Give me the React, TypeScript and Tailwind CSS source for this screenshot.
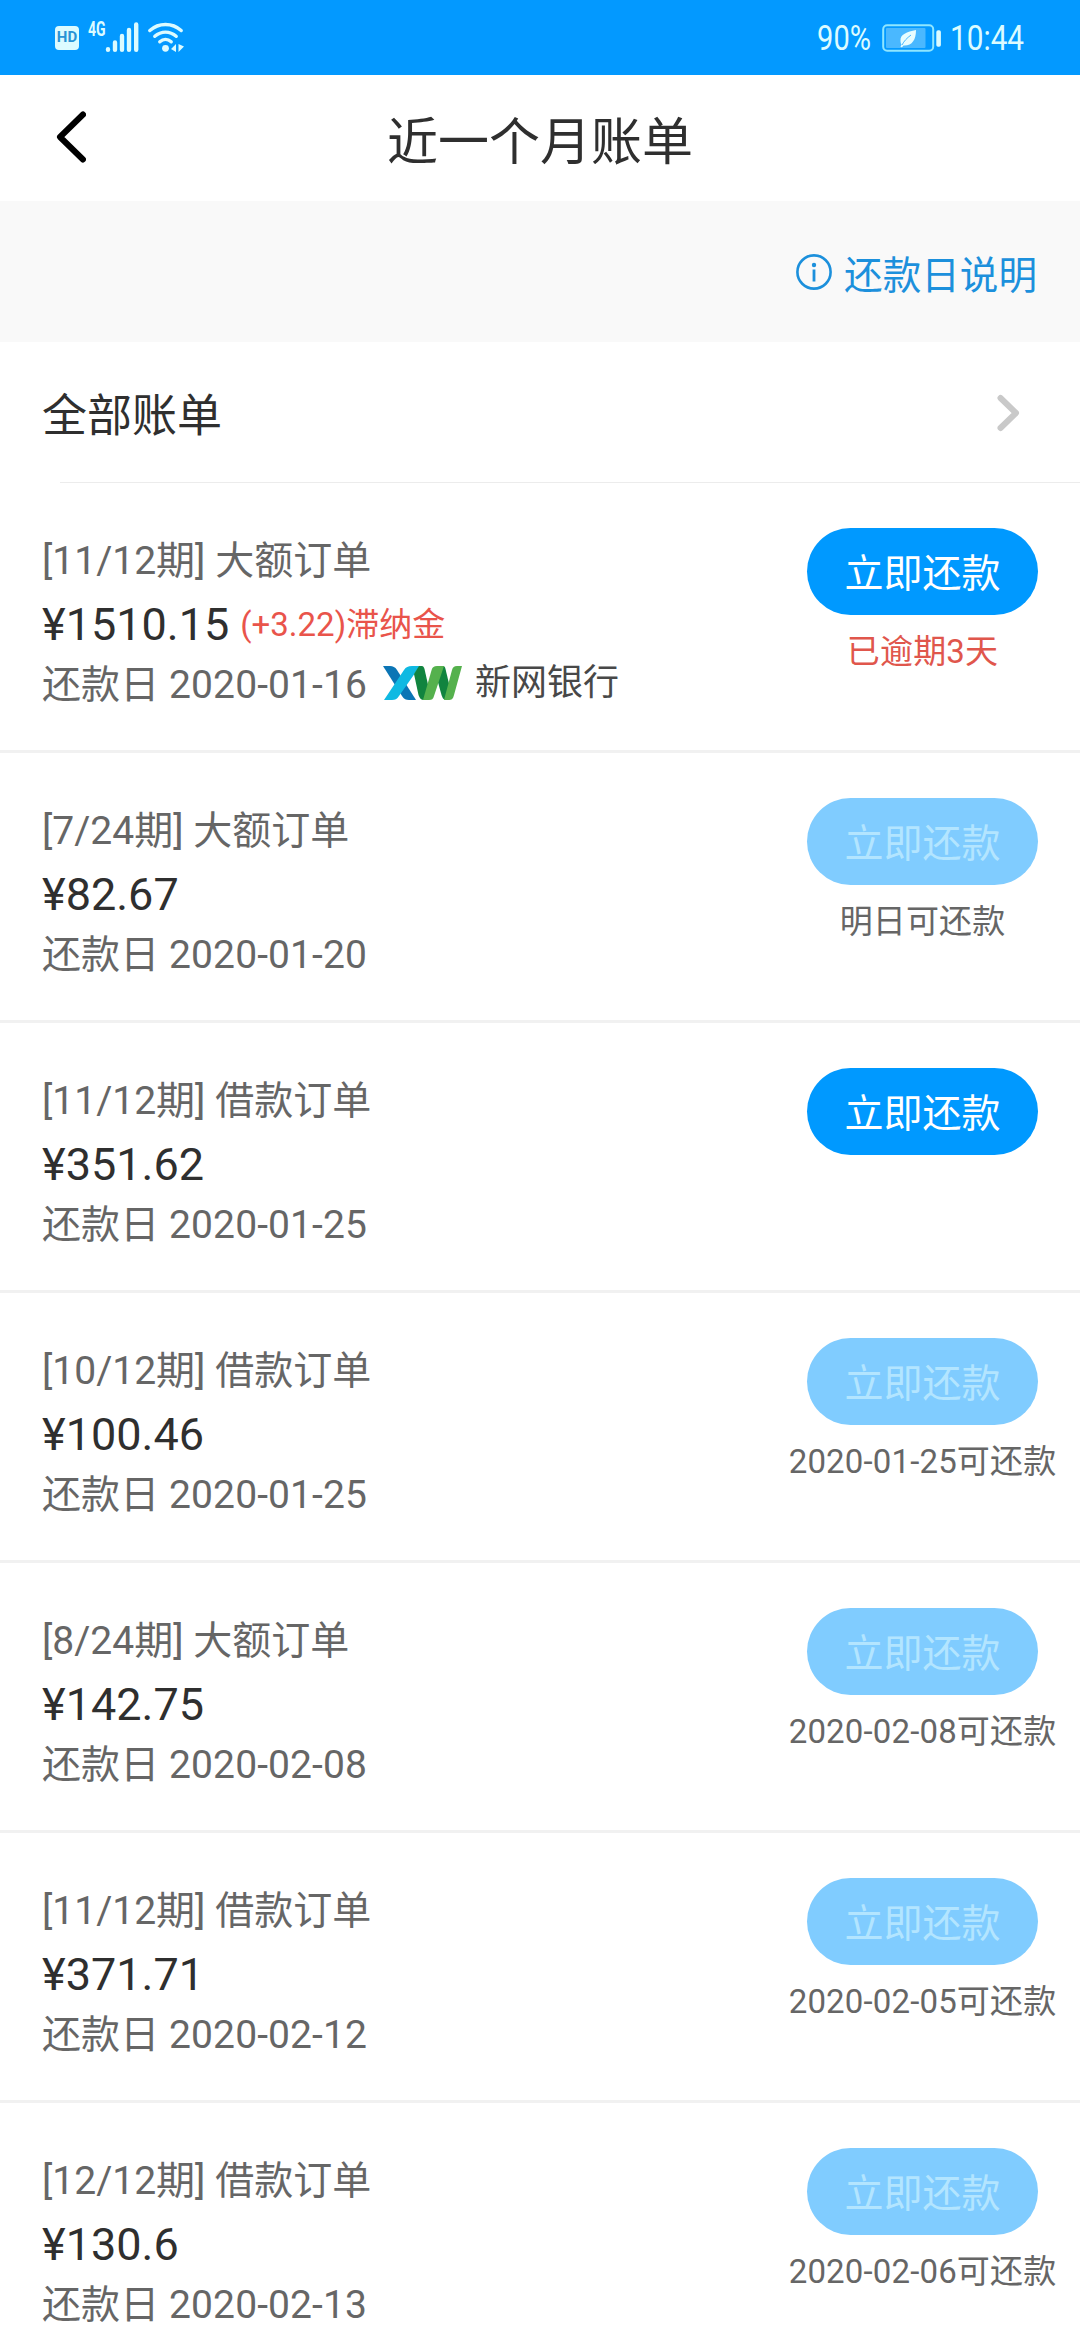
type Bill = {
  period: string;
  kind: string;
  amount: string;
  lateFee?: string;
  dueDate: string;
  bank?: boolean;
  payable: boolean;
  note?: string;
};

const BILLS: Bill[] = [
  { period: "11/12", kind: "大额订单", amount: "1510.15", lateFee: "3.22", dueDate: "2020-01-16", bank: true, payable: true, note: "已逾期3天" },
  { period: "7/24", kind: "大额订单", amount: "82.67", dueDate: "2020-01-20", payable: false, note: "明日可还款" },
  { period: "11/12", kind: "借款订单", amount: "351.62", dueDate: "2020-01-25", payable: true },
  { period: "10/12", kind: "借款订单", amount: "100.46", dueDate: "2020-01-25", payable: false, note: "2020-01-25可还款" },
  { period: "8/24", kind: "大额订单", amount: "142.75", dueDate: "2020-02-08", payable: false, note: "2020-02-08可还款" },
  { period: "11/12", kind: "借款订单", amount: "371.71", dueDate: "2020-02-12", payable: false, note: "2020-02-05可还款" },
  { period: "12/12", kind: "借款订单", amount: "130.6", dueDate: "2020-02-13", payable: false, note: "2020-02-06可还款" },
];

function StatusBar() {
  return (
    <div className="flex h-[75px] shrink-0 items-center justify-between bg-[#0399ff] pr-[57px] pl-[55px] text-[#dcfbff]">
      <div className="flex h-full items-center">
        <span className="flex h-6 w-6 items-center justify-center rounded-[4px] bg-[#dcfbff] text-[15px] font-bold text-[#2a93d5]">
          <span className="-mx-1">HD</span>
        </span>
        <span className="mb-[17px] ml-[9px] w-[17px] origin-left scale-x-[0.7] text-[20px] leading-none font-bold">4G</span>
        {/* Signal bars */}
        <svg viewBox="0 0 34 32" className="mb-px h-8 w-[34px]" stroke="currentColor" strokeWidth="4.4" strokeLinecap="round">
          <path d="M3 28.3V28.8M10 21.5V28.8M17 15V28.8M24 9V28.8M31.2 3.5V28.8" />
        </svg>
        {/* Wifi */}
        <svg viewBox="0 0 38 32" className="mb-px ml-[8px] h-8 w-[38px]" fill="none" stroke="currentColor" strokeWidth="3.4" strokeLinecap="round">
          <path d="M2.8 9.5C11.8 1.5 25.2 1.5 34.2 9.5M7.8 15.3C14.2 9.7 22.8 9.7 29.2 15.3M12.8 20.8C16.3 17.8 20.7 17.8 24.2 20.8" />
          <circle cx="18.5" cy="27.3" r="3.4" fill="currentColor" stroke="none" />
          <path d="M29 23V31L24 28ZM31.5 23V31L37 25.5Z" fill="currentColor" stroke="none" />
        </svg>
      </div>
      <div className="flex h-full items-center text-[35px] leading-none">
        <span className="w-[65px] origin-right scale-x-[0.83] pt-px text-right whitespace-nowrap">90%</span>
        <svg viewBox="0 0 60 30" className="ml-[11px] h-[30px] w-[60px]">
          <rect x="1.2" y="2.2" width="50" height="25.6" rx="4" fill="none" stroke="#8fe6ff" strokeWidth="2" />
          <rect x="4" y="5" width="39.5" height="20" rx="1" fill="#4ab8ff" />
          <path d="M34 7C25 9 18 11 18.5 18C18.6 20 19 21 19.5 21.5L18.5 24L20 24.3L21.5 22.5C30 23 34 17 34 7Z" fill="#e8fdff" />
          <path d="M20 22C22 18 25 15 29 12" fill="none" stroke="#4ab8ff" strokeWidth="1" />
          <rect x="54.3" y="7.3" width="4.6" height="16.4" rx="1.8" fill="#dcfbff" />
        </svg>
        <span className="ml-[8px] w-[73px] origin-left scale-x-[0.85] pt-px whitespace-nowrap">10:44</span>
      </div>
    </div>
  );
}

function BankLogo() {
  return (
    <span className="ml-[16px] flex items-center pb-1">
      <svg viewBox="0 0 80 34" className="h-[34px] w-[80px]">
        <path d="M0 0H7C10 0 12 1 14 4L33 34H26C23 34 21 33 19 30Z" fill="#0b75b5" />
        <path d="M37 0H29C25 0 23 1 21 4L1 34H9C12 34 14 33 16 30Z" fill="#0fb9e2" />
        <path d="M31 8L36 0H39C40 0 41 1 41.500 3L46 23L43 34H41C38 34 36.500 32 35.500 29Z" fill="#11843f" />
        <path d="M56 0H60C61.500 0 62 1 62.500 3L68 26L66 34H64C60.500 34 59.500 32 58.500 29L53 9Z" fill="#11843f" />
        <path d="M61 0H54C51 0 49.500 1 48.600 4L40 34H46C49 34 50 33 51 30Z" fill="#55b14d" />
        <path d="M79 0H74C71 0 70 1 69 4L61 34H65C69 34 70 33 71 29Z" fill="#55b14d" />
      </svg>
      <span className="ml-[12px] text-[36px] leading-none text-[#484848]">新网银行</span>
    </span>
  );
}

function BillRow({ bill }: { bill: Bill }) {
  return (
    <li className="flex h-[270px] shrink-0 justify-between border-b-[3px] border-[#f1f1f1] pr-[42px] pl-[42px]">
      <div className="flex flex-col pt-[47px] text-[39px] whitespace-nowrap text-[#666]">
        <p className="leading-[62px]">
          [{bill.period}期] {bill.kind}
        </p>
        <p className="h-[66px] text-[45px] leading-[66px] text-[#2f2f2f]">
          ¥{bill.amount}
          {bill.lateFee ? <span className="ml-[11px] align-[4px] text-[33px] leading-none text-[#e9544b]">(+{bill.lateFee})滞纳金</span> : null}
        </p>
        <div className="flex h-[54px] items-center leading-[54px]">
          <span className="tracking-[0.1px]">还款日 {bill.dueDate}</span>
          {bill.bank ? <BankLogo /> : null}
        </div>
      </div>
      <div className="flex w-[231px] flex-col items-center pt-[45px]">
        <button
          type="button"
          disabled={!bill.payable}
          className="flex h-[87px] w-full shrink-0 items-center justify-center rounded-full bg-[#0099ff] pt-[6px] text-[39px] leading-none text-white disabled:bg-[#80ccff] disabled:text-[#b3e5ff]"
        >
          立即还款
        </button>
        {bill.note ? (
          <p className={`mt-[13px] text-[33px] leading-[48px] tracking-[0.15px] whitespace-nowrap ${bill.payable ? "text-[#e0564c]" : "text-[#666]"}`}>{bill.note}</p>
        ) : null}
      </div>
    </li>
  );
}

export default function App() {
  return (
    <main className="flex h-[2340px] w-[1080px] flex-col overflow-hidden bg-white font-[Roboto,'Noto_Sans_CJK_SC',sans-serif] text-[#2f2f2f]">
      <StatusBar />
      <header className="grid h-[126px] shrink-0 grid-cols-[120px_1fr_120px] items-center">
        <svg viewBox="0 0 30 52" className="mb-[2px] ml-[56px] h-[52px] w-[30px]" fill="none" stroke="#000" strokeWidth="6" strokeLinecap="round" strokeLinejoin="round">
          <path d="M27 3.500L4 26L27 48.500" />
        </svg>
        <h1 className="pt-[9px] text-center text-[51px] leading-[60px]">近一个月账单</h1>
      </header>
      <div className="flex h-[141px] shrink-0 items-center justify-end bg-[#f9f9f9] pr-[43px] text-[#1c90dc]">
        <svg viewBox="0 0 36 36" className="h-9 w-9" fill="none" stroke="currentColor" strokeWidth="2.6">
          <circle cx="18" cy="18" r="16.600" />
          <path d="M18 15.500V27.500" strokeWidth="2.800" />
          <circle cx="18" cy="11" r="2.200" fill="currentColor" stroke="none" />
        </svg>
        <span className="ml-3 pt-[9px] text-[38.600px] leading-none">还款日说明</span>
      </div>
      <div className="flex h-[140px] shrink-0 items-center justify-between pr-[60px] pl-[42px]">
        <h2 className="pt-[9px] text-[45px] leading-none">全部账单</h2>
        <svg viewBox="0 0 24 38" className="mt-px h-[38px] w-6" fill="none" stroke="#c9c9c9" strokeWidth="6" strokeLinecap="round" strokeLinejoin="round">
          <path d="M4.500 4L20 19L4.500 34" />
        </svg>
      </div>
      <div className="ml-[60px] h-px shrink-0 bg-[#ececec]" />
      <ul className="flex shrink-0 flex-col">
        {BILLS.map((bill) => (
          <BillRow key={bill.period + bill.amount} bill={bill} />
        ))}
      </ul>
    </main>
  );
}
